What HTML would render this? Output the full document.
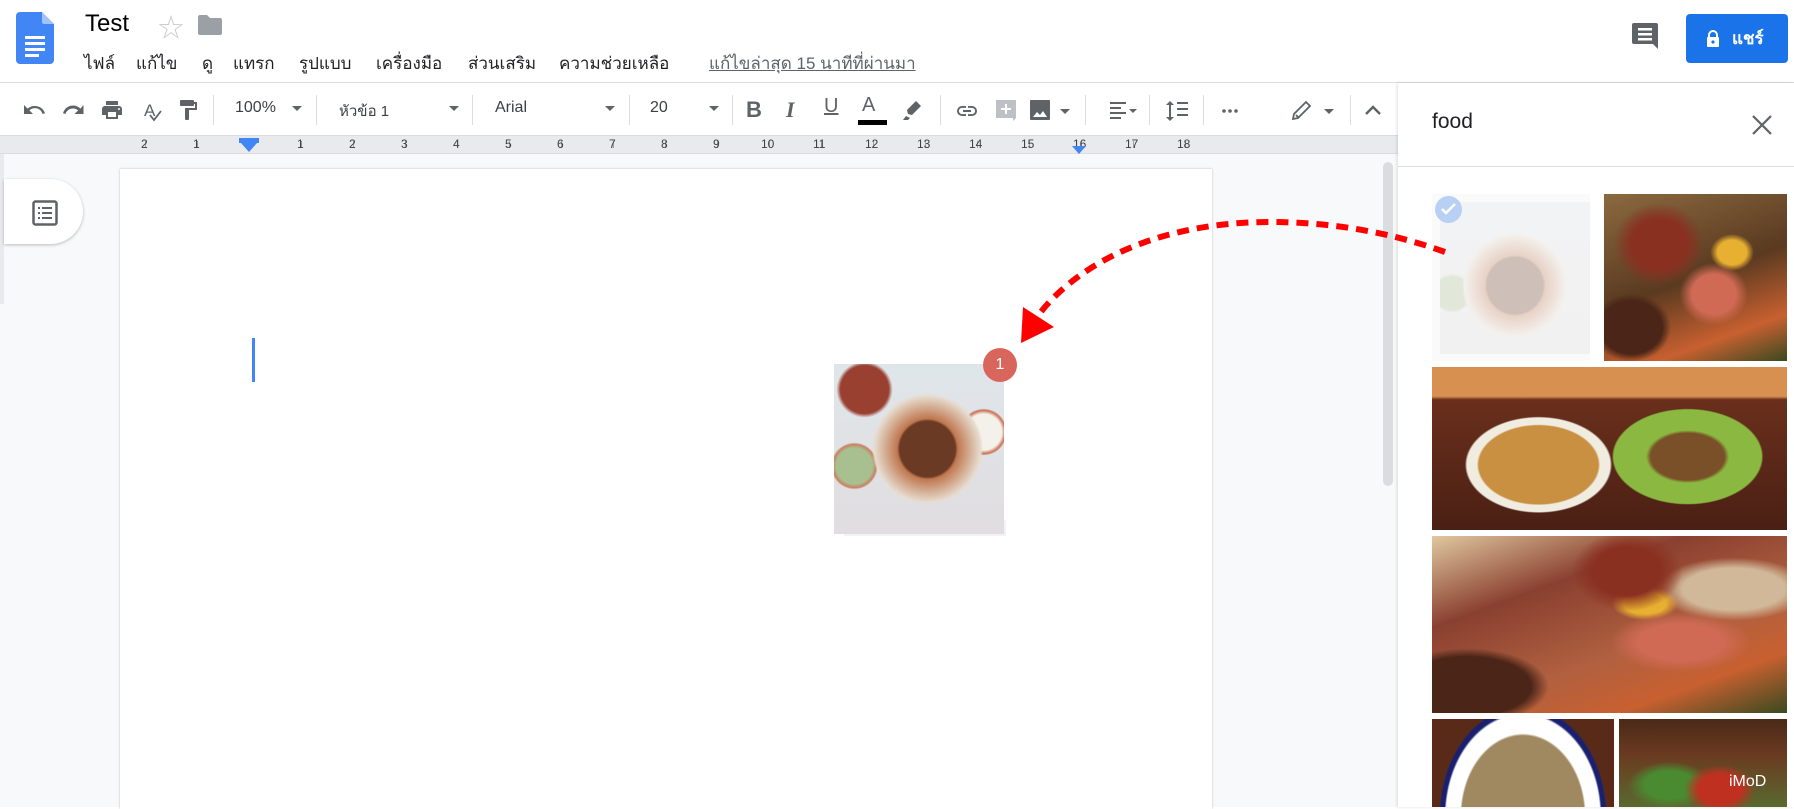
<!DOCTYPE html>
<html><head><meta charset="utf-8">
<style>
*{margin:0;padding:0;box-sizing:border-box}
body{width:1794px;height:807px;overflow:hidden;background:#fff;font-family:"Liberation Sans","Noto Sans CJK SC",sans-serif;position:relative;color:#202124}
.a{position:absolute}
.menu span{position:absolute;top:50px;font-size:17px;color:#202124}
.tb{font-size:16px;color:#3c4043;top:99px}
.sep{position:absolute;top:95px;width:1px;height:30px;background:#dadce0}
.dd{position:absolute;top:106px;width:0;height:0;border-left:5px solid transparent;border-right:5px solid transparent;border-top:5px solid #5f6368}
.rn{position:absolute;top:137px;font-size:12px;color:#3c4043}
</style></head><body>
<svg class="a" style="left:16px;top:12px" width="38" height="52" viewBox="0 0 38 52"><path d="M4 0h22l12 12v36a4 4 0 0 1-4 4H4a4 4 0 0 1-4-4V4a4 4 0 0 1 4-4z" fill="#4285f4"/><path d="M26 0l12 12H28a2 2 0 0 1-2-2z" fill="#a1c2fa"/><rect x="9" y="24" width="20" height="3" fill="#fff"/><rect x="9" y="30" width="20" height="3" fill="#fff"/><rect x="9" y="36" width="20" height="3" fill="#fff"/><rect x="9" y="42" width="14" height="3" fill="#fff"/></svg>
<div class="a" style="left:85px;top:10px;font-size:24px;color:#000">Test</div>
<div class="a" style="left:158px;top:8px;font-size:26px;color:#ccc">☆</div>
<svg class="a" style="left:198px;top:15px" width="24" height="20" viewBox="0 0 24 20"><path d="M0 2a2 2 0 0 1 2-2h7l3 3h10a2 2 0 0 1 2 2v13a2 2 0 0 1-2 2H2a2 2 0 0 1-2-2z" fill="#9aa0a6"/></svg>
<div class="menu">
<span style="left:84px">ไฟล์</span><span style="left:136px">แก้ไข</span><span style="left:202px">ดู</span><span style="left:233px">แทรก</span><span style="left:299px">รูปแบบ</span><span style="left:376px">เครื่องมือ</span><span style="left:468px">ส่วนเสริม</span><span style="left:559px">ความช่วยเหลือ</span><span style="left:709px;color:#5f6368;text-decoration:underline">แก้ไขล่าสุด 15 นาทีที่ผ่านมา</span>
</div>
<svg class="a" style="left:1632px;top:23px" width="26" height="28" viewBox="0 0 26 28"><path d="M2 0h22a2 2 0 0 1 2 2v24l-5-5H2a2 2 0 0 1-2-2V2a2 2 0 0 1 2-2z" fill="#5f6368"/><rect x="6" y="5" width="14" height="2.5" fill="#fff"/><rect x="6" y="10" width="14" height="2.5" fill="#fff"/><rect x="6" y="15" width="14" height="2.5" fill="#fff"/></svg>
<div class="a" style="left:1686px;top:14px;width:102px;height:49px;background:#1a73e8;border-radius:4px;color:#fff;font-size:17px;font-weight:bold;line-height:49px;padding-left:46px">แชร์</div>
<svg class="a" style="left:1706px;top:30px" width="14" height="17" viewBox="0 0 14 17"><path d="M3 7V5a4 4 0 0 1 8 0v2" stroke="#fff" stroke-width="2" fill="none"/><rect x="1" y="7" width="12" height="10" rx="1" fill="#fff"/><circle cx="7" cy="12" r="1.6" fill="#1a73e8"/></svg>
<div class="a" style="left:0;top:82px;width:1794px;height:1px;background:#dadce0"></div>
<svg class="a" style="left:22px;top:98px" width="420" height="26" viewBox="0 0 420 26" fill="#5f6368">
<path d="M12.5 8c-2.6 0-5 1-6.9 2.6L2 7v9h9l-3.6-3.6A7.9 7.9 0 0 1 20.6 16l2.4-.8A10.5 10.5 0 0 0 12.5 8z" />
<path transform="translate(40 0)" d="M18.4 10.6A10.4 10.4 0 0 0 1 15.2l2.4.8a7.9 7.9 0 0 1 12.7-3.6L12.5 16h9V7z"/>
<path transform="translate(78 0)" d="M19 8H5a3 3 0 0 0-3 3v6h4v4h12v-4h4v-6a3 3 0 0 0-3-3zm-3 11H8v-5h8zm3-7a1 1 0 1 1 0-2 1 1 0 0 1 0 2zM18 3H6v4h12z"/>
<text x="122" y="18" font-size="17" font-family="Liberation Sans" fill="#5f6368">A</text><path d="M128 17l4 5 7-9" stroke="#5f6368" stroke-width="1.8" fill="none"/>
<path transform="translate(154 0)" d="M18 4V3a1 1 0 0 0-1-1H5a1 1 0 0 0-1 1v4a1 1 0 0 0 1 1h12a1 1 0 0 0 1-1V6h1v4H9v11a1 1 0 0 0 1 1h2a1 1 0 0 0 1-1v-9h8V4z"/>
</svg>
<div class="sep" style="left:213px"></div>
<div class="a tb" style="left:235px">100%</div><div class="dd" style="left:292px"></div>
<div class="sep" style="left:316px"></div>
<div class="a tb" style="left:339px;font-size:15px">หัวข้อ 1</div><div class="dd" style="left:449px"></div>
<div class="sep" style="left:472px"></div>
<div class="a tb" style="left:495px">Arial</div><div class="dd" style="left:605px"></div>
<div class="sep" style="left:629px"></div>
<div class="a tb" style="left:650px">20</div><div class="dd" style="left:709px"></div>
<div class="sep" style="left:732px"></div>
<div class="a" style="left:746px;top:97px;font-size:22px;font-weight:bold;color:#5f6368">B</div>
<div class="a" style="left:786px;top:97px;font-size:22px;font-style:italic;font-family:'Liberation Serif';font-weight:bold;color:#5f6368">I</div>
<div class="a" style="left:824px;top:95px;font-size:20px;text-decoration:underline;color:#5f6368">U</div>
<div class="a" style="left:862px;top:94px;font-size:20px;color:#5f6368">A</div>
<div class="a" style="left:858px;top:120px;width:29px;height:5px;background:#000"></div>
<svg class="a" style="left:900px;top:98px" width="520" height="26" viewBox="0 0 520 26" fill="#5f6368">
<path d="M6 18l-3 4h5l2-2zM16 3l5 5-9 9-4-1-1-4z"/>
<path transform="translate(55 0)" d="M3.9 13a3.1 3.1 0 0 1 3.1-3.1h4V8H7a5 5 0 0 0 0 10h4v-1.9H7A3.1 3.1 0 0 1 3.9 13zM8 14h8v-2H8zm9-6h-4v1.9h4a3.1 3.1 0 0 1 0 6.2h-4V18h4a5 5 0 0 0 0-10z"/>
<path transform="translate(94 0)" d="M2 2h20v18l-3 3V20H2z" fill="#bdc1c6"/><path transform="translate(94 0)" d="M11 6h2v4h4v2h-4v4h-2v-4H7v-2h4z" fill="#fff"/>
<rect x="130" y="2" width="20" height="20" rx="1"/><path d="M133 19l4-5 3 3 3-4 4 6z" fill="#fff"/><path d="M160 11l5 5 5-5z"/>
<path d="M210 4h16v2h-16zm0 5h11v2h-11zm0 5h16v2h-16zm0 5h11v2h-11z"/><path d="M229 11l4 4 4-4z"/>
<path d="M270 3l4 4h-3v12h3l-4 4-4-4h3V7h-3zm7 1h11v2h-11zm0 6h11v2h-11zm0 6h11v2h-11z"/>
<circle cx="324" cy="13" r="1.8"/><circle cx="330" cy="13" r="1.8"/><circle cx="336" cy="13" r="1.8"/>
<path d="M393 21l1-5 12-12 4 4-12 12zM396 17l3 3" stroke="#5f6368" stroke-width="1.8" fill="none"/><path d="M424 11l5 5 5-5z"/>
<path d="M466 16l7-7 7 7" stroke="#5f6368" stroke-width="2.4" fill="none"/>
</svg>
<div class="sep" style="left:940px"></div><div class="sep" style="left:1085px"></div><div class="sep" style="left:1149px"></div><div class="sep" style="left:1203px"></div><div class="sep" style="left:1350px"></div>
<div class="a" style="left:0;top:135px;width:1398px;height:19px;background:#e8eaed;border-top:1px solid #dadce0;border-bottom:1px solid #dadce0"></div>
<div class="a" style="left:0;top:136px;width:1398px;height:17px;background:repeating-linear-gradient(90deg,transparent 0 25px,#9aa0a6 25px 26px,transparent 26px 52px);background-position:16px 0;clip-path:inset(5px 186px 5px 120px)"></div>
<div class="rn" style="left:141px">2</div><div class="rn" style="left:193px">1</div>
<div class="a" style="left:239px;top:138px;width:20px;height:5px;background:#4285f4"></div>
<div class="a" style="left:241px;top:143px;border-left:8px solid transparent;border-right:8px solid transparent;border-top:9px solid #4285f4"></div>
<div class="rn" style="left:297px">1</div><div class="rn" style="left:349px">2</div><div class="rn" style="left:401px">3</div><div class="rn" style="left:453px">4</div><div class="rn" style="left:505px">5</div><div class="rn" style="left:557px">6</div><div class="rn" style="left:609px">7</div><div class="rn" style="left:661px">8</div><div class="rn" style="left:713px">9</div><div class="rn" style="left:761px">10</div><div class="rn" style="left:813px">11</div><div class="rn" style="left:865px">12</div><div class="rn" style="left:917px">13</div><div class="rn" style="left:969px">14</div><div class="rn" style="left:1021px">15</div><div class="rn" style="left:1073px">16</div><div class="rn" style="left:1125px">17</div><div class="rn" style="left:1177px">18</div>
<div class="a" style="left:1072px;top:146px;border-left:7px solid transparent;border-right:7px solid transparent;border-top:8px solid #4285f4"></div>
<div class="a" style="left:0;top:154px;width:1398px;height:653px;background:#f8f9fa"></div>
<div class="a" style="left:0;top:154px;width:4px;height:150px;background:#e8eaed"></div>
<div class="a" style="left:120px;top:169px;width:1092px;height:640px;background:#fff;box-shadow:0 0 2px rgba(0,0,0,.25)"></div>
<div class="a" style="left:4px;top:179px;width:79px;height:65px;background:#fff;border-radius:0 33px 33px 0;box-shadow:0 1px 3px rgba(0,0,0,.25)"></div>
<svg class="a" style="left:32px;top:200px" width="26" height="26" viewBox="0 0 26 26"><rect x="1.5" y="1.5" width="23" height="23" rx="2" fill="none" stroke="#5f6368" stroke-width="2.5"/><path d="M6 7h2v2H6zm4 0h10v2H10zM6 12h2v2H6zm4 0h10v2H10zM6 17h2v2H6zm4 0h10v2H10z" fill="#5f6368"/></svg>
<div class="a" style="left:252px;top:338px;width:3px;height:44px;background:#4285f4"></div>
<div class="a" style="left:1383px;top:162px;width:10px;height:324px;background:#dadce0;border-radius:5px"></div>
<!-- dragged image -->
<div class="a" style="left:844px;top:520px;width:162px;height:16px;background:#eee;opacity:.7"></div>
<div class="a" style="left:834px;top:364px;width:170px;height:170px;background:radial-gradient(circle at 55% 50%,#6a3a25 0 22%,#c07850 24%,#e6dccf 42%,transparent 44%),radial-gradient(circle at 18% 15%,#9a4030 0 12%,transparent 14%),radial-gradient(circle at 12% 60%,#a8c090 0 10%,#c98060 12%,transparent 13%),radial-gradient(circle at 88% 40%,#f4f0ea 0 10%,#c87050 12%,transparent 13%),linear-gradient(#dfe6ea,#e1dde0)"></div>
<div class="a" style="left:983px;top:348px;width:34px;height:34px;border-radius:50%;background:#d9665c;color:#fff;font-size:16px;text-align:center;line-height:34px">1</div>
<!-- side panel -->
<div class="a" style="left:1398px;top:83px;width:396px;height:724px;background:#fff;box-shadow:-1px 0 3px rgba(0,0,0,.12)"></div>
<div class="a" style="left:1432px;top:110px;font-size:21px;color:#202124">food</div>
<svg class="a" style="left:1751px;top:114px" width="22" height="22" viewBox="0 0 22 22"><path d="M2 2l18 18M20 2L2 20" stroke="#5f6368" stroke-width="2.2"/></svg>
<div class="a" style="left:1398px;top:166px;width:396px;height:1px;background:#dadce0"></div>
<div class="a" style="left:1432px;top:194px;width:158px;height:167px;background:#fafafa"></div>
<div class="a" style="left:1440px;top:202px;width:150px;height:152px;opacity:.3;background:radial-gradient(circle at 50% 55%,#6a3a25 0 25%,#c07850 27%,#e6dccf 45%,transparent 47%),radial-gradient(circle at 8% 60%,#a8c090 0 10%,transparent 12%),linear-gradient(#dfe6ea,#e1dde0)"></div>
<div class="a" style="left:1435px;top:196px;width:27px;height:27px;border-radius:50%;background:#b8d0f4"></div>
<svg class="a" style="left:1441px;top:203px" width="16" height="12"><path d="M1 6l4 4 9-9" stroke="#fff" stroke-width="2.5" fill="none"/></svg>
<div class="a" style="left:1604px;top:194px;width:183px;height:167px;background:radial-gradient(ellipse at 30% 30%,#8a3020 0 15%,transparent 25%),radial-gradient(ellipse at 60% 60%,#d06a55 0 14%,transparent 22%),radial-gradient(ellipse at 70% 35%,#e8b030 0 8%,transparent 12%),radial-gradient(ellipse at 15% 80%,#4a2518 0 14%,transparent 18%),linear-gradient(160deg,#8b6a40,#5a3a20 50%,#c86030 80%,#3a4a20)"></div>
<div class="a" style="left:1432px;top:367px;width:355px;height:163px;background:radial-gradient(ellipse 28% 40% at 30% 60%,#c89040 0 60%,#f0ece0 62% 72%,transparent 74%),radial-gradient(ellipse 26% 36% at 72% 55%,#7a5028 0 40%,#8ab840 45% 80%,transparent 82%),linear-gradient(#d89050 0 18%,#6a2f1c 20%,#4a2014)"></div>
<div class="a" style="left:1432px;top:536px;width:355px;height:177px;background:radial-gradient(ellipse at 55% 20%,#8a3020 0 12%,transparent 20%),radial-gradient(ellipse at 70% 60%,#d06a55 0 12%,transparent 20%),radial-gradient(ellipse at 60% 38%,#e8b030 0 7%,transparent 11%),radial-gradient(ellipse at 10% 85%,#4a2518 0 14%,transparent 18%),radial-gradient(ellipse at 85% 30%,#d0b898 0 12%,transparent 18%),linear-gradient(160deg,#e0c8a0,#8a4030 30%,#b06040 60%,#c86030 80%,#3a4a20)"></div>
<div class="a" style="left:1432px;top:719px;width:182px;height:88px;background:radial-gradient(ellipse 48% 130% at 50% 110%,#a08860 0 70%,#fff 72% 88%,#1a2070 90% 94%,transparent 96%),#5a2a18"></div>
<div class="a" style="left:1619px;top:719px;width:168px;height:88px;background:radial-gradient(ellipse at 60% 80%,#c03020 0 15%,transparent 25%),radial-gradient(ellipse at 30% 75%,#4a8a30 0 15%,transparent 25%),linear-gradient(#4a2a18,#6a3a20 40%,#5a6a30)"></div>
<div class="a" style="left:1729px;top:773px;font-size:16px;color:#fff">iMoD</div>
<svg class="a" style="left:0;top:0" width="1794" height="807"><path d="M1445 252C1390 232 1330 222 1270 222 1160 222 1080 262 1040 313" stroke="#f00" stroke-width="6" fill="none" stroke-dasharray="12 8"/><path d="M1021 343l2-36 31 20z" fill="#f00"/></svg>
</body></html>
